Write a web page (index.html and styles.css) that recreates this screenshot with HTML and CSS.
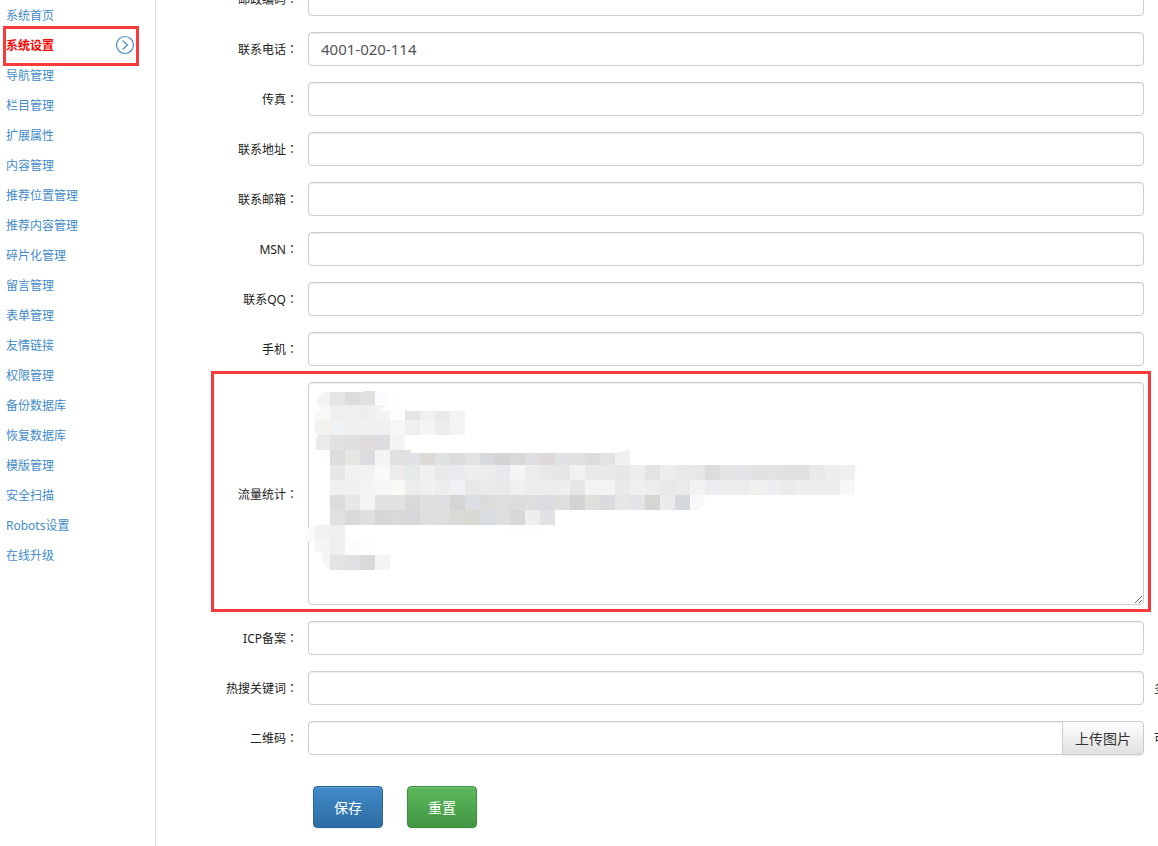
FILE: index.html
```
<!DOCTYPE html>
<html lang="zh-CN">
<head>
  <meta charset="UTF-8">
  <meta name="viewport" content="width=device-width, initial-scale=1.0">
  <title>系统设置</title>
  <link rel="stylesheet" href="styles.css">
</head>
<body>

<div class="layout">
  <nav class="sidebar">
    <ul>
      <li><a href="#">系统首页</a></li>
      <li class="active">
        <a href="#">系统设置</a>
        <svg class="arrow" width="20" height="20" viewBox="0 0 20 20">
          <circle cx="10" cy="10" r="8.5"/>
          <path d="M7.5 5.5L12.5 10L7.5 14.5"/>
        </svg>
        <span class="mark"></span>
      </li>
      <li><a href="#">导航管理</a></li>
      <li><a href="#">栏目管理</a></li>
      <li><a href="#">扩展属性</a></li>
      <li><a href="#">内容管理</a></li>
      <li><a href="#">推荐位置管理</a></li>
      <li><a href="#">推荐内容管理</a></li>
      <li><a href="#">碎片化管理</a></li>
      <li><a href="#">留言管理</a></li>
      <li><a href="#">表单管理</a></li>
      <li><a href="#">友情链接</a></li>
      <li><a href="#">权限管理</a></li>
      <li><a href="#">备份数据库</a></li>
      <li><a href="#">恢复数据库</a></li>
      <li><a href="#">模版管理</a></li>
      <li><a href="#">安全扫描</a></li>
      <li><a href="#">Robots设置</a></li>
      <li><a href="#">在线升级</a></li>
    </ul>
  </nav>

  <main class="content">
    <form class="settings">
      <div class="row">
        <label for="zip">邮政编码<span class="colon">：</span></label>
        <input type="text" id="zip">
      </div>
      <div class="row">
        <label for="tel">联系电话<span class="colon">：</span></label>
        <input type="text" id="tel" value="4001-020-114">
      </div>
      <div class="row">
        <label for="fax">传真<span class="colon">：</span></label>
        <input type="text" id="fax">
      </div>
      <div class="row">
        <label for="address">联系地址<span class="colon">：</span></label>
        <input type="text" id="address">
      </div>
      <div class="row">
        <label for="email">联系邮箱<span class="colon">：</span></label>
        <input type="text" id="email">
      </div>
      <div class="row">
        <label for="msn">MSN<span class="colon">：</span></label>
        <input type="text" id="msn">
      </div>
      <div class="row">
        <label for="qq">联系QQ<span class="colon">：</span></label>
        <input type="text" id="qq">
      </div>
      <div class="row">
        <label for="mobile">手机<span class="colon">：</span></label>
        <input type="text" id="mobile">
      </div>
      <div class="row marked">
        <label for="stats">流量统计<span class="colon">：</span></label>
        <div class="area">
          <textarea id="stats"></textarea>
          <svg class="mosaic" width="560" height="200" viewBox="308 382 560 200">
            <clipPath id="mosaicShape">
              <path d="M326 392H363V391H375V392H383Q388 393 388 399Q388 405 380 411H465V435H405V450H411V453H615L630 450V465H855V495H705Q704 506 701 510H555V533H495V525H345V540H375V555H390V570H330Q322 566 321 552H315V545Q306 543 306 535Q306 526 315 523H330V508Q325 502 330 494V465Q319 463 317 450H316V439L318 437Q312 428 314 420Q314 413 320 410Q315 405 318 398Q320 393 326 392Z"/>
            </clipPath>
            <g id="cells" clip-path="url(#mosaicShape)" shape-rendering="crispEdges"></g>
          </svg>
        </div>
        <span class="mark"></span>
      </div>
      <div class="row">
        <label for="icp">ICP备案<span class="colon">：</span></label>
        <input type="text" id="icp">
      </div>
      <div class="row">
        <label for="keywords">热搜关键词<span class="colon">：</span></label>
        <input type="text" id="keywords">
        <span class="hint">多</span>
      </div>
      <div class="row">
        <label for="qrcode">二维码<span class="colon">：</span></label>
        <div class="input-group">
          <input type="text" id="qrcode">
          <button type="button" class="upload">上传图片</button>
        </div>
        <span class="hint">可</span>
      </div>
      <div class="actions">
        <button type="submit" class="btn save">保存</button>
        <button type="reset" class="btn reset">重置</button>
      </div>
    </form>
  </main>
</div>

<script src="mosaic.js"></script>
</body>
</html>
```
FILE: styles.css
```
* {
  box-sizing: border-box;
}
body {
  margin: 0;
  font-family: "Noto Sans", "Noto Sans CJK SC", sans-serif;
  font-size: 12px;
  color: #222;
  background-color: #fff;
  overflow: hidden;
}
.layout {
  display: flex;
  min-height: 100vh;
}

/* Sidebar */
.sidebar {
  flex: 0 0 156px;
  border-right: 1px solid #ddd;
}
.sidebar ul {
  margin: 0;
  padding: 0;
  list-style: none;
}
.sidebar li {
  position: relative;
  display: flex;
  align-items: center;
  justify-content: space-between;
  height: 30px;
  padding: 0 20px 0 6px;
}
.sidebar a {
  color: #428bca;
  text-decoration: none;
}
.sidebar .active a {
  color: #f00;
  font-weight: bold;
}
.arrow {
  fill: none;
  stroke: #4a90c0;
  stroke-width: 1.2;
}
.mark {
  position: absolute;
  border: 3px solid #f93a3a;
  pointer-events: none;
}
.active .mark {
  top: -4px;
  bottom: -6px;
  left: 3px;
  right: 16px;
}

/* Form */
.content {
  flex: 1;
  min-width: 0;
}
.settings {
  display: flex;
  flex-direction: column;
  gap: 16px;
  margin-top: -18px;
}
.row {
  position: relative;
  display: grid;
  grid-template-columns: 142px 1fr 4px;
  column-gap: 10px;
  align-items: center;
}
.row label {
  text-align: right;
}
/* centered full-width colon */
.colon {
  font-family: "Noto Sans CJK TC", sans-serif;
  font-feature-settings: "locl" 0;
  -webkit-locale: "zh-TW";
}
input, textarea {
  display: block;
  width: 100%;
  padding: 6px 12px;
  border: 1px solid #ccc;
  border-radius: 4px;
  background-color: #fff;
  box-shadow: inset 0 1px 1px rgba(0, 0, 0, 0.075);
  color: #555;
  font-family: inherit;
  font-size: 15px;
}
input {
  height: 34px;
}
.area {
  position: relative;
}
textarea {
  height: 223px;
  resize: vertical;
}
.mosaic {
  position: absolute;
  top: 0;
  left: 0;
  overflow: visible;
  pointer-events: none;
}
.marked .mark {
  top: -11px;
  bottom: -7px;
  left: 55px;
  right: 7px;
}
.hint {
  overflow: hidden;
  white-space: nowrap;
}
.input-group {
  display: flex;
}
.input-group input {
  flex: 1;
  min-width: 0;
  border-radius: 4px 0 0 4px;
}
.upload {
  width: 82px;
  margin-left: -1px;
  padding: 0;
  border: 1px solid #ccc;
  border-radius: 0 4px 4px 0;
  background: linear-gradient(#fff, #e0e0e0);
  box-shadow: 0 1px 1px rgba(0, 0, 0, 0.075);
  color: #333;
  font-family: inherit;
  font-size: 14px;
}
.actions {
  display: flex;
  gap: 24px;
  padding: 15px 0 16px 157px;
}
.btn {
  width: 70px;
  height: 42px;
  padding: 0;
  border: 1px solid;
  border-radius: 4px;
  box-shadow: inset 0 1px 0 rgba(255, 255, 255, 0.15), 0 1px 1px rgba(0, 0, 0, 0.075);
  color: #fff;
  font-family: inherit;
  font-size: 14px;
  cursor: pointer;
}
.save {
  background: linear-gradient(#428bca, #2d6ca2);
  border-color: #2b669a;
}
.reset {
  background: linear-gradient(#5cb85c, #419641);
  border-color: #3e8f3e;
}
```
FILE: mosaic.js
```
// Each row: first column, then the colour of every 15px cell
const rows = [
  [0, 'f3f3f3 e5e5e5 dcdcda e0e0e0 fafcff'],
  [-1, 'fafafa f8f8f6 efefef efefef eeeeec f2f4f4 fefefc e5e5e5 f0f0f0 e9e9e9 f3f3f3'],
  [-1, 'fafafa f3f2ef f0f3f6 f0f0f0 f0f0f0 f0f0f0 f6f6f6 efefef f5f5f5 eeeced f3f3f3'],
  [0, 'eaeaea e0e3e2 dde0df e1dcdc dcdde0 f3f5f5'],
  [0, 'fdfdfd dddddd e6e6e3 dadcdf f4f4f4 e2e1df e0e2e5 dddad8 dfe2e1 dddddd e5e3e1 d7dadd d6d3d5 d9d9d9 dddfe2 dedad9 e0e2e5 e0e0e0 dcdcdc e1e3e5 f0f0f0'],
  [1, 'e7e7e5 eff2f1 f2f2f2 f9f9f9 eeecea e5e9e7 f0f0f0 ebe9e7 e8eaed f0eeec ececec e8e9ed f5f5f3 ededed e8e8e8 e6e6e6 f1f1f1 e9e9e9 e9e9e9 e7e7e7 ededed e4e3e1 ececec e8eae9 e7e7e5 dcdcdc e6e4e2 e2e4e7 e2e2e0 e3e3e3 e2e1df e1e1e1 e9e9e9 eeeeee eef0ef'],
  [1, 'f0f0ee f0f0f0 f3f3f3 f7f7f7 f9f9f6 eaedec f0f0f0 efedeb eff1f4 eae8e6 ebebeb e9e9e9 f0f0f0 ececec ececec eeeeee e5e5e5 f3f3f3 f3f3f3 e9e9e7 eeefef ededed e8e8e8 eaeaea f3f2f0 eaecef eeeeee ececec f0f0ee eceef1 ebebeb eeeeee ececec eeeeee f7f7f7'],
  [0, 'fdfdfd dcdcdc e7e7e7 f4f4f4 e3e2e0 e1e3e2 d8d9da dfdfdd dddee0 d5d5d3 dbdee2 dbdbdb dededc dcdcdc dededc dadce0 dededc d3d3d3 e0dfdc d9dbdf e8e7e5 e2e4e7 d6d5d3 edebe9 d5d9dd f8f8f8'],
  [0, 'fefefc e0e0e0 d9d9d9 dfdfdd d6d6d6 d9d9d9 d5d7da dfdfdf dcdfde d9d9d6 d9d8d3 d8dde1 dfdfdf d9d8d6 eeeeee e0e2e5'],
  [-1, 'fafafa f2f2f2 efefef ffffff ffffff ffffff ffffff ffffff ffffff ffffff ffffff ffffff fdfdfd ffffff fdfdfd fdfdfd'],
  [-1, 'fafafa f5f5f5 efefef fcfcfc fefefe'],
  [0, 'f5f5f5 e6e4e2 dfe1e4 d9d9d9 f4f4f4']
];

const cells = document.getElementById('cells');
rows.forEach(([start, colors], r) => {
  colors.split(' ').forEach((color, i) => {
    const rect = document.createElementNS('http://www.w3.org/2000/svg', 'rect');
    rect.setAttribute('x', 315 + (start + i) * 15);
    rect.setAttribute('y', 390 + r * 15);
    rect.setAttribute('width', 15);
    rect.setAttribute('height', 15);
    rect.setAttribute('fill', '#' + color);
    cells.appendChild(rect);
  });
});
```
